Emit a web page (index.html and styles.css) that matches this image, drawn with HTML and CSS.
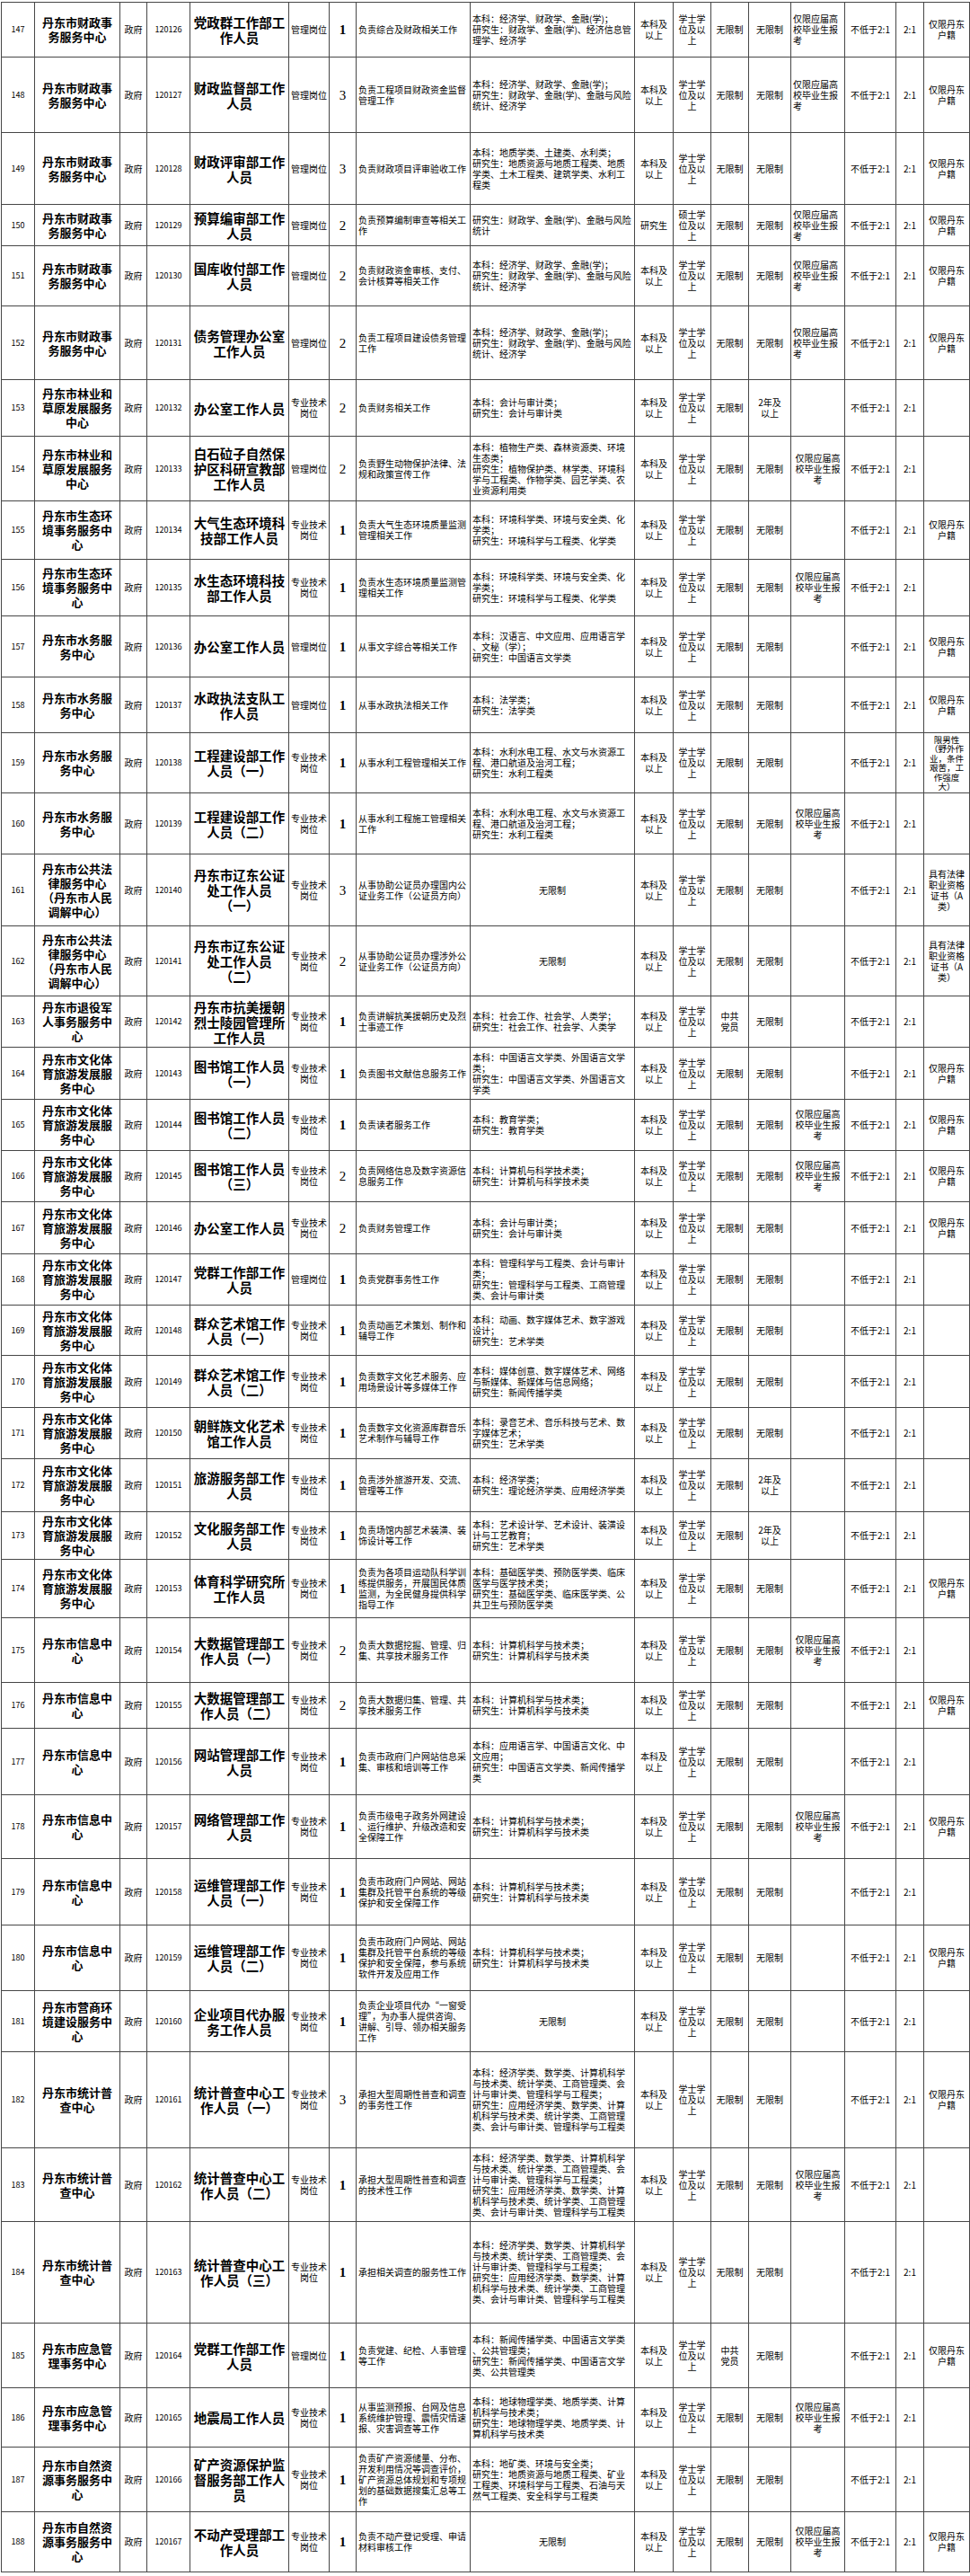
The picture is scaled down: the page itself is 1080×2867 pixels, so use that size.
FILE: index.html
```html
<!DOCTYPE html>
<html lang="zh-CN">
<head>
<meta charset="utf-8">
<title>岗位表</title>
<link rel="stylesheet" href="styles.css">
</head>
<body>
<table class="grid">
<colgroup>
<col class="w-num"><col class="w-unit"><col class="w-gov"><col class="w-code"><col class="w-pos"><col class="w-type"><col class="w-cnt"><col class="w-desc"><col class="w-major"><col class="w-edu"><col class="w-deg"><col class="w-pol"><col class="w-exp"><col class="w-oth"><col class="w-r1"><col class="w-r2"><col class="w-note">
</colgroup>
<tbody>
<tr class="h61"><td class="n">147</td><td class="u">丹东市财政事<br>务服务中心</td><td>政府</td><td class="n">120126</td><td class="p">党政群工作部工<br>作人员</td><td>管理岗位</td><td class="c b">1</td><td class="l">负责综合及财政相关工作</td><td class="l">本科：经济学、财政学、金融(学)；<br>研究生：财政学、金融(学)、经济信息管理学、经济学</td><td>本科及<br>以上</td><td>学士学<br>位及以<br>上</td><td>无限制</td><td>无限制</td><td class="l">仅限应届高<br>校毕业生报<br>考</td><td>不低于2:1</td><td>2:1</td><td>仅限丹东<br>户籍</td></tr>
<tr class="h84"><td class="n">148</td><td class="u">丹东市财政事<br>务服务中心</td><td>政府</td><td class="n">120127</td><td class="p">财政监督部工作<br>人员</td><td>管理岗位</td><td class="c">3</td><td class="l">负责工程项目财政资金监督管理工作</td><td class="l">本科：经济学、财政学、金融(学)；<br>研究生：财政学、金融(学)、金融与风险统计、经济学</td><td>本科及<br>以上</td><td>学士学<br>位及以<br>上</td><td>无限制</td><td>无限制</td><td class="l">仅限应届高<br>校毕业生报<br>考</td><td>不低于2:1</td><td>2:1</td><td>仅限丹东<br>户籍</td></tr>
<tr class="h80"><td class="n">149</td><td class="u">丹东市财政事<br>务服务中心</td><td>政府</td><td class="n">120128</td><td class="p">财政评审部工作<br>人员</td><td>管理岗位</td><td class="c">3</td><td class="l">负责财政项目评审验收工作</td><td class="l">本科：地质学类、土建类、水利类；<br>研究生：地质资源与地质工程类、地质学类、土木工程类、建筑学类、水利工程类</td><td>本科及<br>以上</td><td>学士学<br>位及以<br>上</td><td>无限制</td><td>无限制</td><td></td><td>不低于2:1</td><td>2:1</td><td>仅限丹东<br>户籍</td></tr>
<tr class="h46"><td class="n">150</td><td class="u">丹东市财政事<br>务服务中心</td><td>政府</td><td class="n">120129</td><td class="p">预算编审部工作<br>人员</td><td>管理岗位</td><td class="c">2</td><td class="l">负责预算编制审查等相关工作</td><td class="l">研究生：财政学、金融(学)、金融与风险统计</td><td>研究生</td><td>硕士学<br>位及以<br>上</td><td>无限制</td><td>无限制</td><td class="l">仅限应届高<br>校毕业生报<br>考</td><td>不低于2:1</td><td>2:1</td><td>仅限丹东<br>户籍</td></tr>
<tr class="h67"><td class="n">151</td><td class="u">丹东市财政事<br>务服务中心</td><td>政府</td><td class="n">120130</td><td class="p">国库收付部工作<br>人员</td><td>管理岗位</td><td class="c">2</td><td class="l">负责财政资金审核、支付、会计核算等相关工作</td><td class="l">本科：经济学、财政学、金融(学)；<br>研究生：财政学、金融(学)、金融与风险统计、经济学</td><td>本科及<br>以上</td><td>学士学<br>位及以<br>上</td><td>无限制</td><td>无限制</td><td class="l">仅限应届高<br>校毕业生报<br>考</td><td>不低于2:1</td><td>2:1</td><td>仅限丹东<br>户籍</td></tr>
<tr class="h82"><td class="n">152</td><td class="u">丹东市财政事<br>务服务中心</td><td>政府</td><td class="n">120131</td><td class="p">债务管理办公室<br>工作人员</td><td>管理岗位</td><td class="c">2</td><td class="l">负责工程项目建设债务管理工作</td><td class="l">本科：经济学、财政学、金融(学)；<br>研究生：财政学、金融(学)、金融与风险统计、经济学</td><td>本科及<br>以上</td><td>学士学<br>位及以<br>上</td><td>无限制</td><td>无限制</td><td class="l">仅限应届高<br>校毕业生报<br>考</td><td>不低于2:1</td><td>2:1</td><td>仅限丹东<br>户籍</td></tr>
<tr class="h63"><td class="n">153</td><td class="u">丹东市林业和<br>草原发展服务<br>中心</td><td>政府</td><td class="n">120132</td><td class="p">办公室工作人员</td><td>专业技术<br>岗位</td><td class="c">2</td><td class="l">负责财务相关工作</td><td class="l">本科：会计与审计类；<br>研究生：会计与审计类</td><td>本科及<br>以上</td><td>学士学<br>位及以<br>上</td><td>无限制</td><td>2年及<br>以上</td><td></td><td>不低于2:1</td><td>2:1</td><td></td></tr>
<tr class="h72"><td class="n">154</td><td class="u">丹东市林业和<br>草原发展服务<br>中心</td><td>政府</td><td class="n">120133</td><td class="p">白石砬子自然保<br>护区科研宣教部<br>工作人员</td><td>管理岗位</td><td class="c">2</td><td class="l">负责野生动物保护法律、法规和政策宣传工作</td><td class="l">本科：植物生产类、森林资源类、环境生态类；<br>研究生：植物保护类、林学类、环境科学与工程类、作物学类、园艺学类、农业资源利用类</td><td>本科及<br>以上</td><td>学士学<br>位及以<br>上</td><td>无限制</td><td>无限制</td><td>仅限应届高<br>校毕业生报<br>考</td><td>不低于2:1</td><td>2:1</td><td></td></tr>
<tr class="h65"><td class="n">155</td><td class="u">丹东市生态环<br>境事务服务中<br>心</td><td>政府</td><td class="n">120134</td><td class="p">大气生态环境科<br>技部工作人员</td><td>专业技术<br>岗位</td><td class="c b">1</td><td class="l">负责大气生态环境质量监测管理相关工作</td><td class="l">本科：环境科学类、环境与安全类、化学类；<br>研究生：环境科学与工程类、化学类</td><td>本科及<br>以上</td><td>学士学<br>位及以<br>上</td><td>无限制</td><td>无限制</td><td></td><td>不低于2:1</td><td>2:1</td><td>仅限丹东<br>户籍</td></tr>
<tr class="h63"><td class="n">156</td><td class="u">丹东市生态环<br>境事务服务中<br>心</td><td>政府</td><td class="n">120135</td><td class="p">水生态环境科技<br>部工作人员</td><td>专业技术<br>岗位</td><td class="c b">1</td><td class="l">负责水生态环境质量监测管理相关工作</td><td class="l">本科：环境科学类、环境与安全类、化学类；<br>研究生：环境科学与工程类、化学类</td><td>本科及<br>以上</td><td>学士学<br>位及以<br>上</td><td>无限制</td><td>无限制</td><td>仅限应届高<br>校毕业生报<br>考</td><td>不低于2:1</td><td>2:1</td><td></td></tr>
<tr class="h68"><td class="n">157</td><td class="u">丹东市水务服<br>务中心</td><td>政府</td><td class="n">120136</td><td class="p">办公室工作人员</td><td>管理岗位</td><td class="c b">1</td><td class="l">从事文字综合等相关工作</td><td class="l">本科：汉语言、中文应用、应用语言学、文秘（学）；<br>研究生：中国语言文学类</td><td>本科及<br>以上</td><td>学士学<br>位及以<br>上</td><td>无限制</td><td>无限制</td><td></td><td>不低于2:1</td><td>2:1</td><td>仅限丹东<br>户籍</td></tr>
<tr class="h62"><td class="n">158</td><td class="u">丹东市水务服<br>务中心</td><td>政府</td><td class="n">120137</td><td class="p">水政执法支队工<br>作人员</td><td>管理岗位</td><td class="c b">1</td><td class="l">从事水政执法相关工作</td><td class="l">本科：法学类；<br>研究生：法学类</td><td>本科及<br>以上</td><td>学士学<br>位及以<br>上</td><td>无限制</td><td>无限制</td><td></td><td>不低于2:1</td><td>2:1</td><td>仅限丹东<br>户籍</td></tr>
<tr class="h67"><td class="n">159</td><td class="u">丹东市水务服<br>务中心</td><td>政府</td><td class="n">120138</td><td class="p">工程建设部工作<br>人员（一）</td><td>专业技术<br>岗位</td><td class="c b">1</td><td class="l">从事水利工程管理相关工作</td><td class="l">本科：水利水电工程、水文与水资源工程、港口航道及治河工程；<br>研究生：水利工程类</td><td>本科及<br>以上</td><td>学士学<br>位及以<br>上</td><td>无限制</td><td>无限制</td><td></td><td>不低于2:1</td><td>2:1</td><td class="tight">限男性<br>（野外作<br>业，条件<br>艰苦，工<br>作强度<br>大）</td></tr>
<tr class="h68"><td class="n">160</td><td class="u">丹东市水务服<br>务中心</td><td>政府</td><td class="n">120139</td><td class="p">工程建设部工作<br>人员（二）</td><td>专业技术<br>岗位</td><td class="c b">1</td><td class="l">从事水利工程施工管理相关工作</td><td class="l">本科：水利水电工程、水文与水资源工程、港口航道及治河工程；<br>研究生：水利工程类</td><td>本科及<br>以上</td><td>学士学<br>位及以<br>上</td><td>无限制</td><td>无限制</td><td>仅限应届高<br>校毕业生报<br>考</td><td>不低于2:1</td><td>2:1</td><td></td></tr>
<tr class="h80"><td class="n">161</td><td class="u">丹东市公共法<br>律服务中心<br>（丹东市人民<br>调解中心）</td><td>政府</td><td class="n">120140</td><td class="p">丹东市辽东公证<br>处工作人员<br>（一）</td><td>专业技术<br>岗位</td><td class="c">3</td><td class="l">从事协助公证员办理国内公证业务工作（公证员方向）</td><td>无限制</td><td>本科及<br>以上</td><td>学士学<br>位及以<br>上</td><td>无限制</td><td>无限制</td><td></td><td>不低于2:1</td><td>2:1</td><td>具有法律<br>职业资格<br>证书（A<br>类）</td></tr>
<tr class="h78"><td class="n">162</td><td class="u">丹东市公共法<br>律服务中心<br>（丹东市人民<br>调解中心）</td><td>政府</td><td class="n">120141</td><td class="p">丹东市辽东公证<br>处工作人员<br>（二）</td><td>专业技术<br>岗位</td><td class="c">2</td><td class="l">从事协助公证员办理涉外公证业务工作（公证员方向）</td><td>无限制</td><td>本科及<br>以上</td><td>学士学<br>位及以<br>上</td><td>无限制</td><td>无限制</td><td></td><td>不低于2:1</td><td>2:1</td><td>具有法律<br>职业资格<br>证书（A<br>类）</td></tr>
<tr class="h57"><td class="n">163</td><td class="u">丹东市退役军<br>人事务服务中<br>心</td><td>政府</td><td class="n">120142</td><td class="p">丹东市抗美援朝<br>烈士陵园管理所<br>工作人员</td><td>专业技术<br>岗位</td><td class="c b">1</td><td class="l">负责讲解抗美援朝历史及烈士事迹工作</td><td class="l">本科：社会工作、社会学、人类学；<br>研究生：社会工作、社会学、人类学</td><td>本科及<br>以上</td><td>学士学<br>位及以<br>上</td><td>中共<br>党员</td><td>无限制</td><td></td><td>不低于2:1</td><td>2:1</td><td></td></tr>
<tr class="h58"><td class="n">164</td><td class="u">丹东市文化体<br>育旅游发展服<br>务中心</td><td>政府</td><td class="n">120143</td><td class="p">图书馆工作人员<br>（一）</td><td>专业技术<br>岗位</td><td class="c b">1</td><td class="l">负责图书文献信息服务工作</td><td class="l">本科：中国语言文学类、外国语言文学类；<br>研究生：中国语言文学类、外国语言文学类</td><td>本科及<br>以上</td><td>学士学<br>位及以<br>上</td><td>无限制</td><td>无限制</td><td></td><td>不低于2:1</td><td>2:1</td><td>仅限丹东<br>户籍</td></tr>
<tr class="h57"><td class="n">165</td><td class="u">丹东市文化体<br>育旅游发展服<br>务中心</td><td>政府</td><td class="n">120144</td><td class="p">图书馆工作人员<br>（二）</td><td>专业技术<br>岗位</td><td class="c b">1</td><td class="l">负责读者服务工作</td><td class="l">本科：教育学类；<br>研究生：教育学类</td><td>本科及<br>以上</td><td>学士学<br>位及以<br>上</td><td>无限制</td><td>无限制</td><td>仅限应届高<br>校毕业生报<br>考</td><td>不低于2:1</td><td>2:1</td><td>仅限丹东<br>户籍</td></tr>
<tr class="h57"><td class="n">166</td><td class="u">丹东市文化体<br>育旅游发展服<br>务中心</td><td>政府</td><td class="n">120145</td><td class="p">图书馆工作人员<br>（三）</td><td>专业技术<br>岗位</td><td class="c">2</td><td class="l">负责网络信息及数字资源信息服务工作</td><td class="l">本科：计算机与科学技术类；<br>研究生：计算机与科学技术类</td><td>本科及<br>以上</td><td>学士学<br>位及以<br>上</td><td>无限制</td><td>无限制</td><td>仅限应届高<br>校毕业生报<br>考</td><td>不低于2:1</td><td>2:1</td><td>仅限丹东<br>户籍</td></tr>
<tr class="h58"><td class="n">167</td><td class="u">丹东市文化体<br>育旅游发展服<br>务中心</td><td>政府</td><td class="n">120146</td><td class="p">办公室工作人员</td><td>专业技术<br>岗位</td><td class="c">2</td><td class="l">负责财务管理工作</td><td class="l">本科：会计与审计类；<br>研究生：会计与审计类</td><td>本科及<br>以上</td><td>学士学<br>位及以<br>上</td><td>无限制</td><td>无限制</td><td></td><td>不低于2:1</td><td>2:1</td><td>仅限丹东<br>户籍</td></tr>
<tr class="h57"><td class="n">168</td><td class="u">丹东市文化体<br>育旅游发展服<br>务中心</td><td>政府</td><td class="n">120147</td><td class="p">党群工作部工作<br>人员</td><td>管理岗位</td><td class="c b">1</td><td class="l">负责党群事务性工作</td><td class="l">本科：管理科学与工程类、会计与审计类；<br>研究生：管理科学与工程类、工商管理类、会计与审计类</td><td>本科及<br>以上</td><td>学士学<br>位及以<br>上</td><td>无限制</td><td>无限制</td><td></td><td>不低于2:1</td><td>2:1</td><td></td></tr>
<tr class="h56"><td class="n">169</td><td class="u">丹东市文化体<br>育旅游发展服<br>务中心</td><td>政府</td><td class="n">120148</td><td class="p">群众艺术馆工作<br>人员（一）</td><td>专业技术<br>岗位</td><td class="c b">1</td><td class="l">负责动画艺术策划、制作和辅导工作</td><td class="l">本科：动画、数字媒体艺术、数字游戏设计；<br>研究生：艺术学类</td><td>本科及<br>以上</td><td>学士学<br>位及以<br>上</td><td>无限制</td><td>无限制</td><td></td><td>不低于2:1</td><td>2:1</td><td></td></tr>
<tr class="h58"><td class="n">170</td><td class="u">丹东市文化体<br>育旅游发展服<br>务中心</td><td>政府</td><td class="n">120149</td><td class="p">群众艺术馆工作<br>人员（二）</td><td>专业技术<br>岗位</td><td class="c b">1</td><td class="l">负责数字文化艺术服务、应用场景设计等多媒体工作</td><td class="l">本科：媒体创意、数字媒体艺术、网络与新媒体、新媒体与信息网络；<br>研究生：新闻传播学类</td><td>本科及<br>以上</td><td>学士学<br>位及以<br>上</td><td>无限制</td><td>无限制</td><td></td><td>不低于2:1</td><td>2:1</td><td></td></tr>
<tr class="h57"><td class="n">171</td><td class="u">丹东市文化体<br>育旅游发展服<br>务中心</td><td>政府</td><td class="n">120150</td><td class="p">朝鲜族文化艺术<br>馆工作人员</td><td>专业技术<br>岗位</td><td class="c b">1</td><td class="l">负责数字文化资源库群音乐艺术制作与辅导工作</td><td class="l">本科：录音艺术、音乐科技与艺术、数字媒体艺术；<br>研究生：艺术学类</td><td>本科及<br>以上</td><td>学士学<br>位及以<br>上</td><td>无限制</td><td>无限制</td><td></td><td>不低于2:1</td><td>2:1</td><td></td></tr>
<tr class="h59"><td class="n">172</td><td class="u">丹东市文化体<br>育旅游发展服<br>务中心</td><td>政府</td><td class="n">120151</td><td class="p">旅游服务部工作<br>人员</td><td>专业技术<br>岗位</td><td class="c b">1</td><td class="l">负责涉外旅游开发、交流、管理等工作</td><td class="l">本科：经济学类；<br>研究生：理论经济学类、应用经济学类</td><td>本科及<br>以上</td><td>学士学<br>位及以<br>上</td><td>无限制</td><td>2年及<br>以上</td><td></td><td>不低于2:1</td><td>2:1</td><td></td></tr>
<tr class="h53"><td class="n">173</td><td class="u">丹东市文化体<br>育旅游发展服<br>务中心</td><td>政府</td><td class="n">120152</td><td class="p">文化服务部工作<br>人员</td><td>专业技术<br>岗位</td><td class="c b">1</td><td class="l">负责场馆内部艺术装潢、装饰设计等工作</td><td class="l">本科：艺术设计学、艺术设计、装潢设计与工艺教育；<br>研究生：艺术学类</td><td>本科及<br>以上</td><td>学士学<br>位及以<br>上</td><td>无限制</td><td>2年及<br>以上</td><td></td><td>不低于2:1</td><td>2:1</td><td></td></tr>
<tr class="h65"><td class="n">174</td><td class="u">丹东市文化体<br>育旅游发展服<br>务中心</td><td>政府</td><td class="n">120153</td><td class="p">体育科学研究所<br>工作人员</td><td>专业技术<br>岗位</td><td class="c b">1</td><td class="l">负责为各项目运动队科学训练提供服务，开展国民体质监测，为全民健身提供科学指导工作</td><td class="l">本科：基础医学类、预防医学类、临床医学与医学技术类；<br>研究生：基础医学类、临床医学类、公共卫生与预防医学类</td><td>本科及<br>以上</td><td>学士学<br>位及以<br>上</td><td>无限制</td><td>无限制</td><td></td><td>不低于2:1</td><td>2:1</td><td>仅限丹东<br>户籍</td></tr>
<tr class="h72"><td class="n">175</td><td class="u">丹东市信息中<br>心</td><td>政府</td><td class="n">120154</td><td class="p">大数据管理部工<br>作人员（一）</td><td>专业技术<br>岗位</td><td class="c">2</td><td class="l">负责大数据挖掘、管理、归集、共享技术服务工作</td><td class="l">本科：计算机科学与技术类；<br>研究生：计算机科学与技术类</td><td>本科及<br>以上</td><td>学士学<br>位及以<br>上</td><td>无限制</td><td>无限制</td><td>仅限应届高<br>校毕业生报<br>考</td><td>不低于2:1</td><td>2:1</td><td></td></tr>
<tr class="h51"><td class="n">176</td><td class="u">丹东市信息中<br>心</td><td>政府</td><td class="n">120155</td><td class="p">大数据管理部工<br>作人员（二）</td><td>专业技术<br>岗位</td><td class="c">2</td><td class="l">负责大数据归集、管理、共享技术服务工作</td><td class="l">本科：计算机科学与技术类；<br>研究生：计算机科学与技术类</td><td>本科及<br>以上</td><td>学士学<br>位及以<br>上</td><td>无限制</td><td>无限制</td><td></td><td>不低于2:1</td><td>2:1</td><td>仅限丹东<br>户籍</td></tr>
<tr class="h74"><td class="n">177</td><td class="u">丹东市信息中<br>心</td><td>政府</td><td class="n">120156</td><td class="p">网站管理部工作<br>人员</td><td>专业技术<br>岗位</td><td class="c b">1</td><td class="l">负责市政府门户网站信息采集、审核和培训等工作</td><td class="l">本科：应用语言学、中国语言文化、中文应用；<br>研究生：中国语言文学类、新闻传播学类</td><td>本科及<br>以上</td><td>学士学<br>位及以<br>上</td><td>无限制</td><td>无限制</td><td></td><td>不低于2:1</td><td>2:1</td><td></td></tr>
<tr class="h71"><td class="n">178</td><td class="u">丹东市信息中<br>心</td><td>政府</td><td class="n">120157</td><td class="p">网络管理部工作<br>人员</td><td>专业技术<br>岗位</td><td class="c b">1</td><td class="l">负责市级电子政务外网建设、运行维护、升级改造和安全保障工作</td><td class="l">本科：计算机科学与技术类；<br>研究生：计算机科学与技术类</td><td>本科及<br>以上</td><td>学士学<br>位及以<br>上</td><td>无限制</td><td>无限制</td><td>仅限应届高<br>校毕业生报<br>考</td><td>不低于2:1</td><td>2:1</td><td>仅限丹东<br>户籍</td></tr>
<tr class="h74"><td class="n">179</td><td class="u">丹东市信息中<br>心</td><td>政府</td><td class="n">120158</td><td class="p">运维管理部工作<br>人员（一）</td><td>专业技术<br>岗位</td><td class="c b">1</td><td class="l">负责市政府门户网站、网站集群及托管平台系统的等级保护和安全保障工作</td><td class="l">本科：计算机科学与技术类；<br>研究生：计算机科学与技术类</td><td>本科及<br>以上</td><td>学士学<br>位及以<br>上</td><td>无限制</td><td>无限制</td><td></td><td>不低于2:1</td><td>2:1</td><td></td></tr>
<tr class="h73"><td class="n">180</td><td class="u">丹东市信息中<br>心</td><td>政府</td><td class="n">120159</td><td class="p">运维管理部工作<br>人员（二）</td><td>专业技术<br>岗位</td><td class="c b">1</td><td class="l">负责市政府门户网站、网站集群及托管平台系统的等级保护和安全保障，参与系统软件开发及应用工作</td><td class="l">本科：计算机科学与技术类；<br>研究生：计算机科学与技术类</td><td>本科及<br>以上</td><td>学士学<br>位及以<br>上</td><td>无限制</td><td>无限制</td><td></td><td>不低于2:1</td><td>2:1</td><td>仅限丹东<br>户籍</td></tr>
<tr class="h68"><td class="n">181</td><td class="u">丹东市营商环<br>境建设服务中<br>心</td><td>政府</td><td class="n">120160</td><td class="p">企业项目代办服<br>务工作人员</td><td>专业技术<br>岗位</td><td class="c b">1</td><td class="l">负责企业项目代办“一窗受理”，为办事人提供咨询、讲解、引导、领办相关服务工作</td><td>无限制</td><td>本科及<br>以上</td><td>学士学<br>位及以<br>上</td><td>无限制</td><td>无限制</td><td></td><td>不低于2:1</td><td>2:1</td><td></td></tr>
<tr class="h107"><td class="n">182</td><td class="u">丹东市统计普<br>查中心</td><td>政府</td><td class="n">120161</td><td class="p">统计普查中心工<br>作人员（一）</td><td>专业技术<br>岗位</td><td class="c">3</td><td class="l">承担大型周期性普查和调查的事务性工作</td><td class="l">本科：经济学类、数学类、计算机科学与技术类、统计学类、工商管理类、会计与审计类、管理科学与工程类；<br>研究生：应用经济学类、数学类、计算机科学与技术类、统计学类、工商管理类、会计与审计类、管理科学与工程类</td><td>本科及<br>以上</td><td>学士学<br>位及以<br>上</td><td>无限制</td><td>无限制</td><td></td><td>不低于2:1</td><td>2:1</td><td>仅限丹东<br>户籍</td></tr>
<tr class="h82"><td class="n">183</td><td class="u">丹东市统计普<br>查中心</td><td>政府</td><td class="n">120162</td><td class="p">统计普查中心工<br>作人员（二）</td><td>专业技术<br>岗位</td><td class="c b">1</td><td class="l">承担大型周期性普查和调查的技术性工作</td><td class="l">本科：经济学类、数学类、计算机科学与技术类、统计学类、工商管理类、会计与审计类、管理科学与工程类；<br>研究生：应用经济学类、数学类、计算机科学与技术类、统计学类、工商管理类、会计与审计类、管理科学与工程类</td><td>本科及<br>以上</td><td>学士学<br>位及以<br>上</td><td>无限制</td><td>无限制</td><td>仅限应届高<br>校毕业生报<br>考</td><td>不低于2:1</td><td>2:1</td><td></td></tr>
<tr class="h113"><td class="n">184</td><td class="u">丹东市统计普<br>查中心</td><td>政府</td><td class="n">120163</td><td class="p">统计普查中心工<br>作人员（三）</td><td>专业技术<br>岗位</td><td class="c b">1</td><td class="l">承担相关调查的服务性工作</td><td class="l">本科：经济学类、数学类、计算机科学与技术类、统计学类、工商管理类、会计与审计类、管理科学与工程类；<br>研究生：应用经济学类、数学类、计算机科学与技术类、统计学类、工商管理类、会计与审计类、管理科学与工程类</td><td>本科及<br>以上</td><td>学士学<br>位及以<br>上</td><td>无限制</td><td>无限制</td><td></td><td>不低于2:1</td><td>2:1</td><td></td></tr>
<tr class="h72"><td class="n">185</td><td class="u">丹东市应急管<br>理事务中心</td><td>政府</td><td class="n">120164</td><td class="p">党群工作部工作<br>人员</td><td>管理岗位</td><td class="c b">1</td><td class="l">负责党建、纪检、人事管理等工作</td><td class="l">本科：新闻传播学类、中国语言文学类、公共管理类；<br>研究生：新闻传播学类、中国语言文学类、公共管理类</td><td>本科及<br>以上</td><td>学士学<br>位及以<br>上</td><td>中共<br>党员</td><td>无限制</td><td></td><td>不低于2:1</td><td>2:1</td><td>仅限丹东<br>户籍</td></tr>
<tr class="h66"><td class="n">186</td><td class="u">丹东市应急管<br>理事务中心</td><td>政府</td><td class="n">120165</td><td class="p">地震局工作人员</td><td>专业技术<br>岗位</td><td class="c b">1</td><td class="l">从事监测预报、台网及信息系统维护管理、震情灾情速报、灾害调查等工作</td><td class="l">本科：地球物理学类、地质学类、计算机科学与技术类；<br>研究生：地球物理学类、地质学类、计算机科学与技术类</td><td>本科及<br>以上</td><td>学士学<br>位及以<br>上</td><td>无限制</td><td>无限制</td><td>仅限应届高<br>校毕业生报<br>考</td><td>不低于2:1</td><td>2:1</td><td></td></tr>
<tr class="h72"><td class="n">187</td><td class="u">丹东市自然资<br>源事务服务中<br>心</td><td>政府</td><td class="n">120166</td><td class="p">矿产资源保护监<br>督服务部工作人<br>员</td><td>专业技术<br>岗位</td><td class="c b">1</td><td class="l">负责矿产资源储量、分布、开发利用情况等调查评价，矿产资源总体规划和专项规划的基础数据搜集汇总等工作</td><td class="l">本科：地矿类、环境与安全类；<br>研究生：地质资源与地质工程类、矿业工程类、环境科学与工程类、石油与天然气工程类、安全科学与工程类</td><td>本科及<br>以上</td><td>学士学<br>位及以<br>上</td><td>无限制</td><td>无限制</td><td></td><td>不低于2:1</td><td>2:1</td><td></td></tr>
<tr class="h67"><td class="n">188</td><td class="u">丹东市自然资<br>源事务服务中<br>心</td><td>政府</td><td class="n">120167</td><td class="p">不动产受理部工<br>作人员</td><td>专业技术<br>岗位</td><td class="c b">1</td><td class="l">负责不动产登记受理、申请材料审核工作</td><td>无限制</td><td>本科及<br>以上</td><td>学士学<br>位及以<br>上</td><td>无限制</td><td>无限制</td><td>仅限应届高<br>校毕业生报<br>考</td><td>不低于2:1</td><td>2:1</td><td>仅限丹东<br>户籍</td></tr>
</tbody>
</table>
</body>
</html>
```

FILE: styles.css
```css
html, body {
  margin: 0;
  padding: 0;
  background: #ffffff;
}

body {
  font-family: "Noto Sans CJK SC", "Noto Sans", sans-serif;
  color: #000000;
}

.grid {
  border-collapse: collapse;
  table-layout: fixed;
  width: 1078px;
  margin: 2px 0 0 1px;
}

.w-num { width: 37px; }
.w-unit { width: 95px; }
.w-gov { width: 30px; }
.w-code { width: 48px; }
.w-pos { width: 110px; }
.w-type { width: 45px; }
.w-cnt { width: 30px; }
.w-desc { width: 127px; }
.w-major { width: 183px; }
.w-edu { width: 43px; }
.w-deg { width: 42px; }
.w-pol { width: 42px; }
.w-exp { width: 47px; }
.w-oth { width: 60px; }
.w-r1 { width: 57px; }
.w-r2 { width: 31px; }
.w-note { width: 51px; }

.grid td {
  border: 1px solid #474747;
  padding: 0 2px;
  font-size: 10px;
  line-height: 12px;
  vertical-align: middle;
  text-align: center;
  line-break: anywhere;
  word-break: break-all;
  overflow: hidden;
}

.grid td.l { text-align: left; }
.grid td.n { font-size: 9px; }

.grid td.u {
  font-size: 13px;
  font-weight: bold;
  line-height: 16px;
}

.grid td.p {
  font-size: 14.5px;
  font-weight: bold;
  line-height: 17px;
  white-space: nowrap;
}

.grid td.c {
  font-family: "Liberation Serif", serif;
  font-size: 15px;
}

.grid td.b { font-weight: bold; }

.grid td.tight {
  line-height: 10.5px;
  font-size: 9.5px;
  padding: 0 1px;
}

.h46 { height: 46px; }
.h51 { height: 51px; }
.h53 { height: 53px; }
.h56 { height: 56px; }
.h57 { height: 57px; }
.h58 { height: 58px; }
.h59 { height: 59px; }
.h61 { height: 61px; }
.h62 { height: 62px; }
.h63 { height: 63px; }
.h65 { height: 65px; }
.h66 { height: 66px; }
.h67 { height: 67px; }
.h68 { height: 68px; }
.h71 { height: 71px; }
.h72 { height: 72px; }
.h73 { height: 73px; }
.h74 { height: 74px; }
.h78 { height: 78px; }
.h80 { height: 80px; }
.h82 { height: 82px; }
.h84 { height: 84px; }
.h107 { height: 107px; }
.h113 { height: 113px; }
```
